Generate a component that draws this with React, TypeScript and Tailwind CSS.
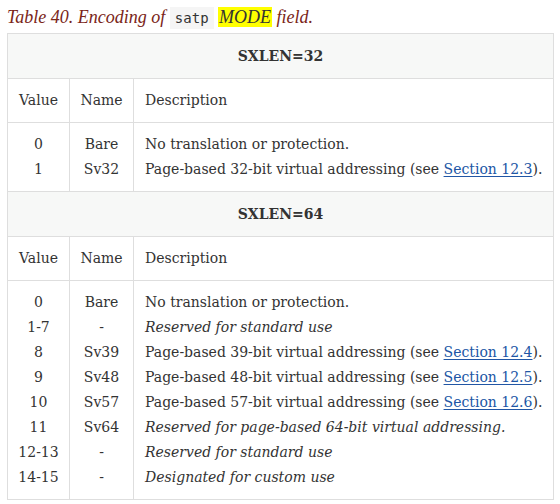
const serif = { fontFamily: '"DejaVu Serif", "Liberation Serif", serif' }

type Row = { value: string; name: string; desc: React.ReactNode; italic?: boolean }

function Link({ children }: { children: React.ReactNode }) {
  return <span className="text-[#2156a5] underline underline-offset-2">{children}</span>
}

const rows32: Row[] = [
  { value: '0', name: 'Bare', desc: 'No translation or protection.' },
  {
    value: '1',
    name: 'Sv32',
    desc: (
      <>
        Page-based 32-bit virtual addressing (see <Link>Section 12.3</Link>).
      </>
    ),
  },
]

const rows64: Row[] = [
  { value: '0', name: 'Bare', desc: 'No translation or protection.' },
  { value: '1-7', name: '-', desc: 'Reserved for standard use', italic: true },
  {
    value: '8',
    name: 'Sv39',
    desc: (
      <>
        Page-based 39-bit virtual addressing (see <Link>Section 12.4</Link>).
      </>
    ),
  },
  {
    value: '9',
    name: 'Sv48',
    desc: (
      <>
        Page-based 48-bit virtual addressing (see <Link>Section 12.5</Link>).
      </>
    ),
  },
  {
    value: '10',
    name: 'Sv57',
    desc: (
      <>
        Page-based 57-bit virtual addressing (see <Link>Section 12.6</Link>).
      </>
    ),
  },
  { value: '11', name: 'Sv64', desc: 'Reserved for page-based 64-bit virtual addressing.', italic: true },
  { value: '12-13', name: '-', desc: 'Reserved for standard use', italic: true },
  { value: '14-15', name: '-', desc: 'Designated for custom use', italic: true },
]

const cell = 'border border-[#dedede] p-0'

function SectionHeader({ label }: { label: string }) {
  return (
    <>
      <tr className="h-[45px]">
        <th colSpan={3} className={`${cell} bg-[#f7f8f7] text-center font-bold text-[#333]`}>
          {label}
        </th>
      </tr>
      <tr className="h-[44px]">
        <td className={`${cell} text-center`}>Value</td>
        <td className={`${cell} text-center`}>Name</td>
        <td className={`${cell} px-[11px]`}>Description</td>
      </tr>
    </>
  )
}

function Body({ rows }: { rows: Row[] }) {
  return (
    <tr>
      <td className={`${cell} py-[9px] text-center align-top`}>
        {rows.map((r) => (
          <div key={r.value}>{r.value}</div>
        ))}
      </td>
      <td className={`${cell} py-[9px] text-center align-top`}>
        {rows.map((r) => (
          <div key={r.value}>{r.name}</div>
        ))}
      </td>
      <td className={`${cell} px-[11px] py-[9px] align-top whitespace-nowrap`}>
        {rows.map((r) => (
          <div key={r.value} className={r.italic ? 'italic' : ''}>
            {r.desc}
          </div>
        ))}
      </td>
    </tr>
  )
}

export default function App() {
  return (
    <main className="w-[560px] h-[504px] overflow-hidden bg-white px-[7px] text-[#333]" style={serif}>
      <div
        className="pt-[5px] h-[33px] text-[18px] italic leading-[24px] text-[#7a2518] whitespace-nowrap"
        style={{ fontFamily: '"Liberation Serif", serif' }}
      >
        Table 40. Encoding of{' '}
        <code
          className="not-italic bg-[#f5f5f5] px-[5px] py-[3px] text-[14px] text-[#333]"
          style={{ fontFamily: '"DejaVu Sans Mono", monospace' }}
        >
          satp
        </code>{' '}
        <mark className="bg-[#ffff00] px-px text-[#333]">MODE</mark> field.
      </div>
      <table className="w-[547px] table-fixed border-collapse text-[14px] leading-[25px] text-[#333]" style={serif}>
        <colgroup>
          <col className="w-[62px]" />
          <col className="w-[64px]" />
          <col />
        </colgroup>
        <tbody>
          <SectionHeader label="SXLEN=32" />
          <Body rows={rows32} />
          <SectionHeader label="SXLEN=64" />
          <Body rows={rows64} />
        </tbody>
      </table>
    </main>
  )
}
